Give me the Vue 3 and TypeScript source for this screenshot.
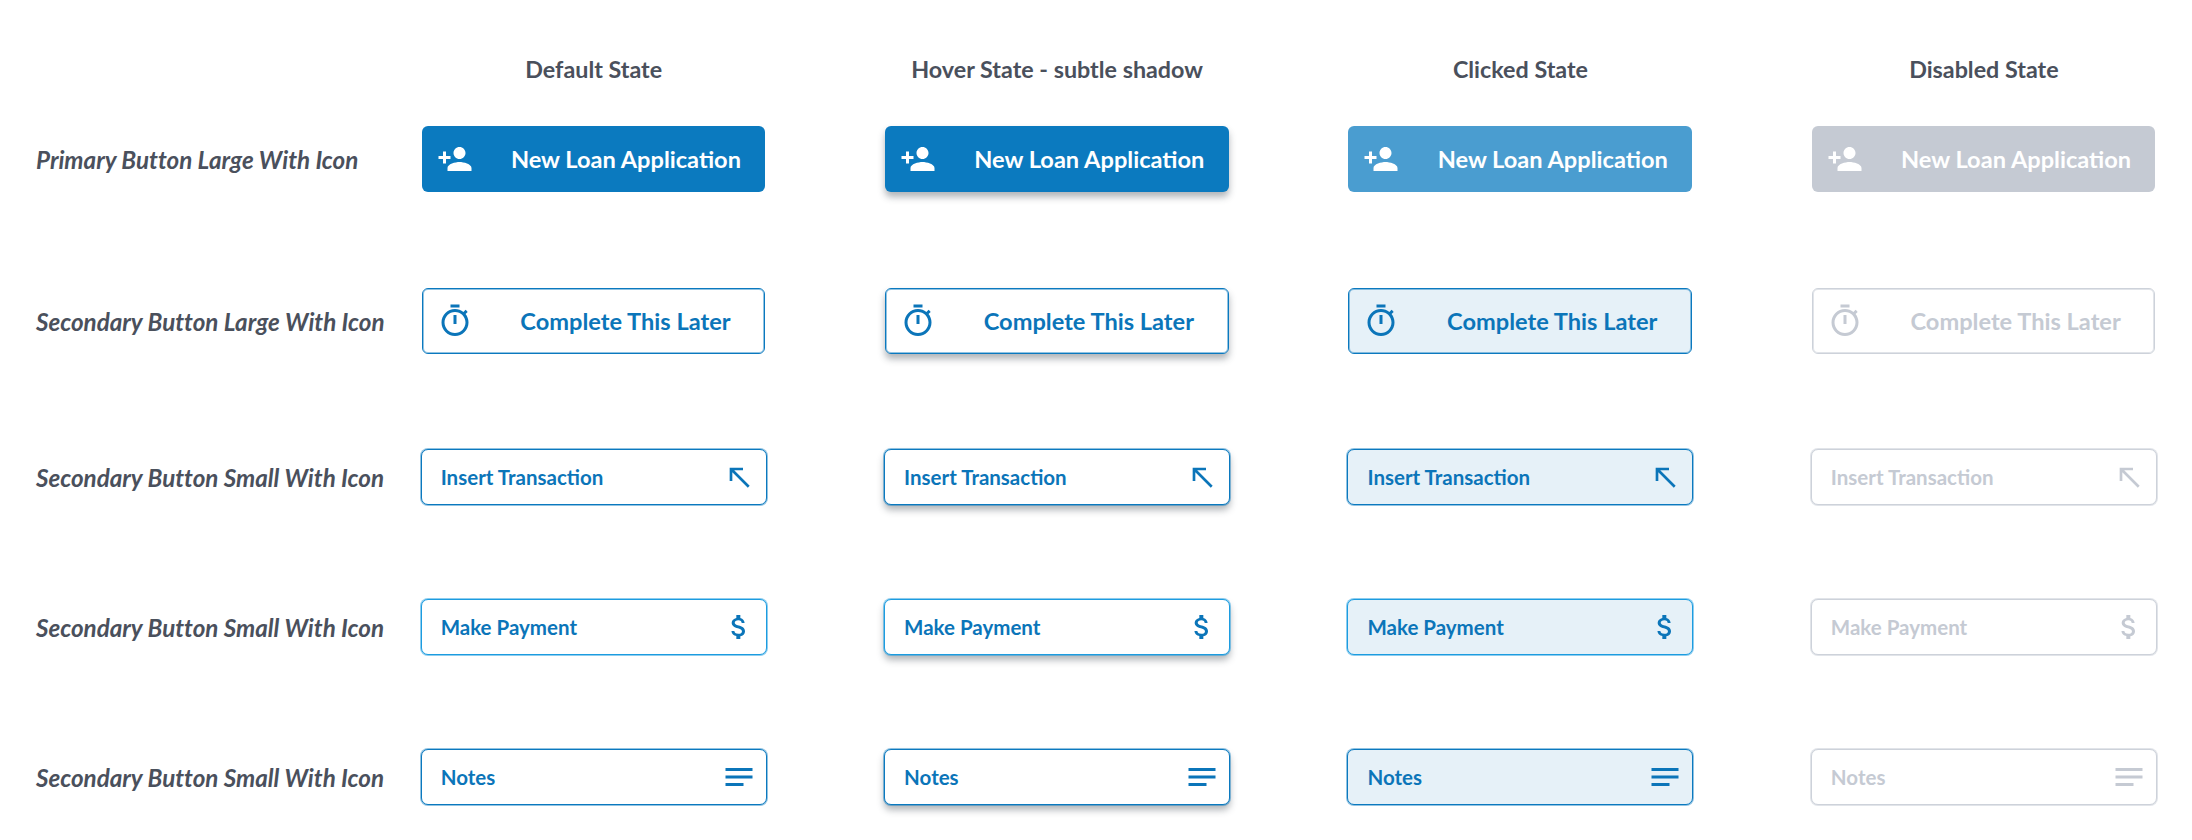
<script setup lang="ts">
type IconName = 'add' | 'timer' | 'arrow' | 'dollar' | 'notes'
interface Row { label: string; text: string; icon: IconName; kind: 'primary' | 'secondary'; size: 'large' | 'small'; tone?: string }

const icons: Record<IconName, string> = {
  add: 'M15 12c2.21 0 4-1.79 4-4s-1.79-4-4-4-4 1.79-4 4 1.79 4 4 4zm-9-2V7H4v3H1v2h3v3h2v-3h3v-2H6zm9 4c-2.67 0-8 1.34-8 4v2h16v-2c0-2.66-5.33-4-8-4z',
  timer: 'M15 1H9v2h6V1zm-4 13h2V8h-2v6zm8.03-6.61l1.42-1.42c-.43-.51-.9-.99-1.41-1.41l-1.42 1.42C16.07 4.74 14.12 4 12 4c-4.97 0-9 4.03-9 9s4.02 9 9 9 9-4.03 9-9c0-2.12-.74-4.07-1.97-5.61zM12 20c-3.87 0-7-3.13-7-7s3.13-7 7-7 7 3.13 7 7-3.13 7-7 7z',
  arrow: 'M5 15h2V8.41L18.59 20 20 18.59 8.41 7H15V5H5v10z',
  dollar: 'M11.8 10.9c-2.27-.59-3-1.2-3-2.15 0-1.09 1.01-1.85 2.7-1.85 1.78 0 2.44.85 2.5 2.1h2.21c-.07-1.72-1.12-3.3-3.21-3.81V3h-3v2.16c-1.94.42-3.5 1.68-3.5 3.61 0 2.31 1.91 3.46 4.7 4.13 2.5.6 3 1.48 3 2.41 0 .69-.49 1.79-2.7 1.79-2.06 0-2.87-.92-2.98-2.1h-2.2c.12 2.19 1.76 3.42 3.68 3.83V21h3v-2.15c1.95-.37 3.5-1.5 3.5-3.55 0-2.84-2.43-3.81-4.7-4.4z',
  notes: 'M3 18h12v-2H3v2zM3 6v2h18V6H3zm0 7h18v-2H3v2z',
}

const states = [
  { key: 'default', title: 'Default State' },
  { key: 'hover', title: 'Hover State - subtle shadow' },
  { key: 'clicked', title: 'Clicked State' },
  { key: 'disabled', title: 'Disabled State' },
]

const rows: Row[] = [
  { label: 'Primary Button Large With Icon', text: 'New Loan Application', icon: 'add', kind: 'primary', size: 'large' },
  { label: 'Secondary Button Large With Icon', text: 'Complete This Later', icon: 'timer', kind: 'secondary', size: 'large' },
  { label: 'Secondary Button Small With Icon', text: 'Insert Transaction', icon: 'arrow', kind: 'secondary', size: 'small' },
  { label: 'Secondary Button Small With Icon', text: 'Make Payment', icon: 'dollar', kind: 'secondary', size: 'small', tone: 'bright' },
  { label: 'Secondary Button Small With Icon', text: 'Notes', icon: 'notes', kind: 'secondary', size: 'small' },
]
</script>

<template>
  <main class="sheet">
    <header class="row heads">
      <span></span>
      <div v-for="s in states" :key="s.key" class="head">{{ s.title }}</div>
    </header>
    <section v-for="r in rows" :key="r.text" class="row" :class="'row-' + r.size">
      <div class="label">{{ r.label }}</div>
      <div v-for="s in states" :key="s.key" class="cell">
        <button type="button" class="btn" :class="[r.kind, r.size, s.key, r.tone]">
          <svg class="icon" :class="'icon-' + r.icon" viewBox="0 0 24 24" aria-hidden="true"><path :d="icons[r.icon]" /></svg>
          <span class="text">{{ r.text }}</span>
        </button>
      </div>
    </section>
  </main>
</template>

<style>
html, body { background: #fff; }
</style>

<style scoped>
.sheet {
  width: 2192px;
  height: 840px;
  box-sizing: border-box;
  padding: 55px 0 0 36px;
  font-family: Lato, "Noto Sans", sans-serif;
  font-variant-ligatures: none;
  overflow: hidden;
}
.row {
  display: grid;
  grid-template-columns: 385.7px repeat(4, 463.4px);
  align-items: center;
}
.heads { height: 28px; margin-bottom: 43px; }
.head {
  width: 344px;
  text-align: center;
  font-size: 23.3px;
  font-weight: 700;
  color: #4a505c;
  white-space: nowrap;
}
.row-large { height: 66px; margin-bottom: 96px; }
.row-large + .row-large { margin-bottom: 95px; }
.row-small { height: 56px; margin-bottom: 94px; }
.label {
  font-size: 24.2px;
  font-weight: 700;
  font-style: italic;
  color: #4a505c;
  white-space: nowrap;
}
.cell { display: flex; }
.btn {
  --ring: 0 0 0 0 transparent;
  --lift: 0 0 0 0 transparent;
  display: flex;
  align-items: center;
  box-sizing: border-box;
  width: 343.5px;
  height: 66px;
  margin: 0;
  padding: 0 0 0 15px;
  border: 0 solid transparent;
  border-radius: 6px;
  background: #fff;
  font-family: inherit;
  font-weight: 700;
  font-size: 23.6px;
  color: #0b75b9;
  fill: currentColor;
  box-shadow: var(--ring), var(--lift);
}
.text { white-space: nowrap; }
.icon { flex: none; width: 36px; height: 36px; }

.large .text { flex: 1; margin-left: 14px; text-align: center; }

.small {
  width: 346px;
  height: 56px;
  margin-left: -1px;
  padding: 0 9px 0 19px;
  justify-content: space-between;
  font-size: 20.5px;
  border-radius: 7px;
}
.small .text { margin-bottom: 1px; }
.small .icon-arrow, .small .icon-dollar { width: 32px; height: 32px; margin: 0 2px; order: 1; }
.small .icon-notes { order: 1; }

.secondary { border-width: 1px; border-color: #0b79bf; }
.secondary.large { padding-left: 14px; --ring: inset 0 0 0 1px rgba(11, 121, 191, 0.45); }
.secondary.small { --ring: 0 0 0 1px rgba(11, 121, 191, 0.45); }
.secondary.bright { border-color: #1c9ce0; }
.secondary.small.bright { --ring: 0 0 0 1px rgba(28, 156, 224, 0.5); }
.secondary.clicked { background: #e6f1f8; }
.secondary.disabled { border-color: #cdd2da; color: #c5cad3; }
.secondary.large.disabled { --ring: inset 0 0 0 1px rgba(205, 210, 218, 0.6); }
.secondary.small.disabled { --ring: 0 0 0 1px rgba(205, 210, 218, 0.6); }

.primary { background: #0b7abf; color: #fff; }
.primary.clicked { background: #4a9dd0; }
.primary.disabled { background: #c5cad3; }

.hover { --lift: 0 5px 7px rgba(50, 60, 70, 0.38); }
</style>
